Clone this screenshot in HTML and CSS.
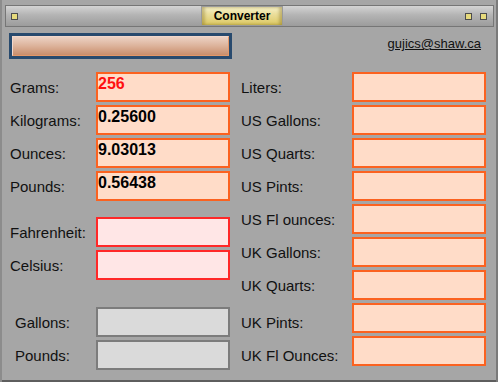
FILE: index.html
```html
<!DOCTYPE html>
<html lang="en">

<head>
    <meta charset="UTF-8">
    <meta name="viewport" content="width=device-width, initial-scale=1.0">
    <title>Converter</title>
    <link rel="stylesheet" href="styles.css">
</head>

<body>
    <div class="window">
        <div class="titlebar">
            <span class="dot"></span>
            <div class="title-tab">Converter</div>
            <span class="spacer"></span>
            <span class="dot"></span>
            <span class="dot dot-last"></span>
        </div>

        <div class="top-row">
            <div class="top-button"><div class="top-button-inner"></div></div>
            <a class="email" href="#">gujics@shaw.ca</a>
        </div>

        <div class="panel">
            <div class="col col-left">
                <div class="field"><span class="label">Grams:</span><div class="box box-orange"><span class="value value-red">256</span></div></div>
                <div class="field"><span class="label">Kilograms:</span><div class="box box-orange"><span class="value">0.25600</span></div></div>
                <div class="field"><span class="label">Ounces:</span><div class="box box-orange"><span class="value">9.03013</span></div></div>
                <div class="field"><span class="label">Pounds:</span><div class="box box-orange"><span class="value">0.56438</span></div></div>

                <div class="group temp">
                    <div class="field"><span class="label">Fahrenheit:</span><div class="box box-red"></div></div>
                    <div class="field"><span class="label">Celsius:</span><div class="box box-red"></div></div>
                </div>

                <div class="group water">
                    <div class="field"><span class="label indent">Gallons:</span><div class="box box-gray"></div></div>
                    <div class="field"><span class="label indent">Pounds:</span><div class="box box-gray"></div></div>
                </div>
            </div>

            <div class="col col-right">
                <div class="field"><span class="label">Liters:</span><div class="box box-orange"></div></div>
                <div class="field"><span class="label">US Gallons:</span><div class="box box-orange"></div></div>
                <div class="field"><span class="label">US Quarts:</span><div class="box box-orange"></div></div>
                <div class="field"><span class="label">US Pints:</span><div class="box box-orange"></div></div>
                <div class="field"><span class="label">US Fl ounces:</span><div class="box box-orange"></div></div>
                <div class="field"><span class="label">UK Gallons:</span><div class="box box-orange"></div></div>
                <div class="field"><span class="label">UK Quarts:</span><div class="box box-orange"></div></div>
                <div class="field"><span class="label low">UK Pints:</span><div class="box box-orange"></div></div>
                <div class="field"><span class="label low">UK Fl Ounces:</span><div class="box box-orange"></div></div>
            </div>
        </div>
    </div>
</body>

</html>
```

FILE: styles.css
```css
* {
    margin: 0;
    padding: 0;
    box-sizing: border-box;
}

body {
    background: #a6a6a6;
    font-family: "Liberation Sans", Arial, sans-serif;
    color: #111;
}

.window {
    width: 498px;
    height: 382px;
    background: #a6a6a6;
    box-shadow: inset 2px 0 #8c8c8c, inset -2px 0 #7a7a7a, inset 0 -2px #5e5e5e;
    overflow: hidden;
}

/* title bar */
.titlebar {
    display: flex;
    align-items: center;
    height: 22px;
    margin: 5px 4px 0 5px;
    padding: 0 6px 0 5px;
    border: 1px solid #767676;
    background: linear-gradient(#d4d4d4, #b4b4b4 45%, #9c9c9c);
}

.dot {
    width: 7px;
    height: 7px;
    border: 1px solid #4c4c4c;
    background: #e6da7c;
}

.dot-last {
    margin-left: 8px;
}

.title-tab {
    height: 20px;
    width: 82px;
    margin-left: 183px;
    border: 1px solid #9a9a9a;
    background: linear-gradient(#f7f2cc, #ece0a0 35%, #dcc862);
    box-shadow: inset 3px 0 3px rgba(120, 100, 20, 0.35), inset -3px 0 3px rgba(120, 100, 20, 0.35);
    font-size: 12px;
    font-weight: bold;
    line-height: 18px;
    text-align: center;
    color: #000;
}

.spacer {
    flex: 1;
}

/* top row */
.top-row {
    display: flex;
    justify-content: space-between;
    align-items: flex-start;
    padding: 0 17px 0 9px;
    margin-top: 6px;
}

.top-button {
    width: 223px;
    height: 26px;
    border: 3px solid #284a6e;
    background: #284a6e;
}

.top-button-inner {
    height: 100%;
    border: 1px solid #e49868;
    border-top-color: #f2d8cc;
    border-left-color: #f2d8cc;
    background: linear-gradient(#ecd2c4, #dcb29a 50%, #c98e6c);
}

.email {
    margin-top: 3px;
    font-size: 13px;
    line-height: 15px;
    color: #111;
    text-decoration: underline;
}

/* fields */
.panel {
    display: flex;
    padding-left: 10px;
    margin-top: 13px;
}

.col-left {
    width: 220px;
}

.col-right {
    margin-left: 11px;
}

.field {
    display: flex;
    align-items: center;
    height: 30px;
    margin-bottom: 3px;
}

.label {
    width: 86px;
    font-size: 15px;
    white-space: nowrap;
}

.col-right .label {
    width: 111px;
}

.label.indent {
    padding-left: 5px;
}

.label.low {
    position: relative;
    top: 4px;
}

/* margins collapse with the field's 3px */
.temp {
    margin-top: 16px;
}

.water {
    margin-top: 27px;
}

.box {
    width: 134px;
    height: 30px;
    border: 2px solid;
    padding-top: 1px;
}

.box-orange {
    border-color: #fb6220;
    background: #ffdcc8;
}

.box-red {
    border-color: #ff2828;
    background: #ffe6e6;
}

.box-gray {
    border-color: #7c7c7c;
    background: #dadada;
}

.value {
    display: block;
    font-size: 16px;
    font-weight: bold;
    line-height: 18px;
    color: #000;
}

.value-red {
    color: #ff1010;
}
```
